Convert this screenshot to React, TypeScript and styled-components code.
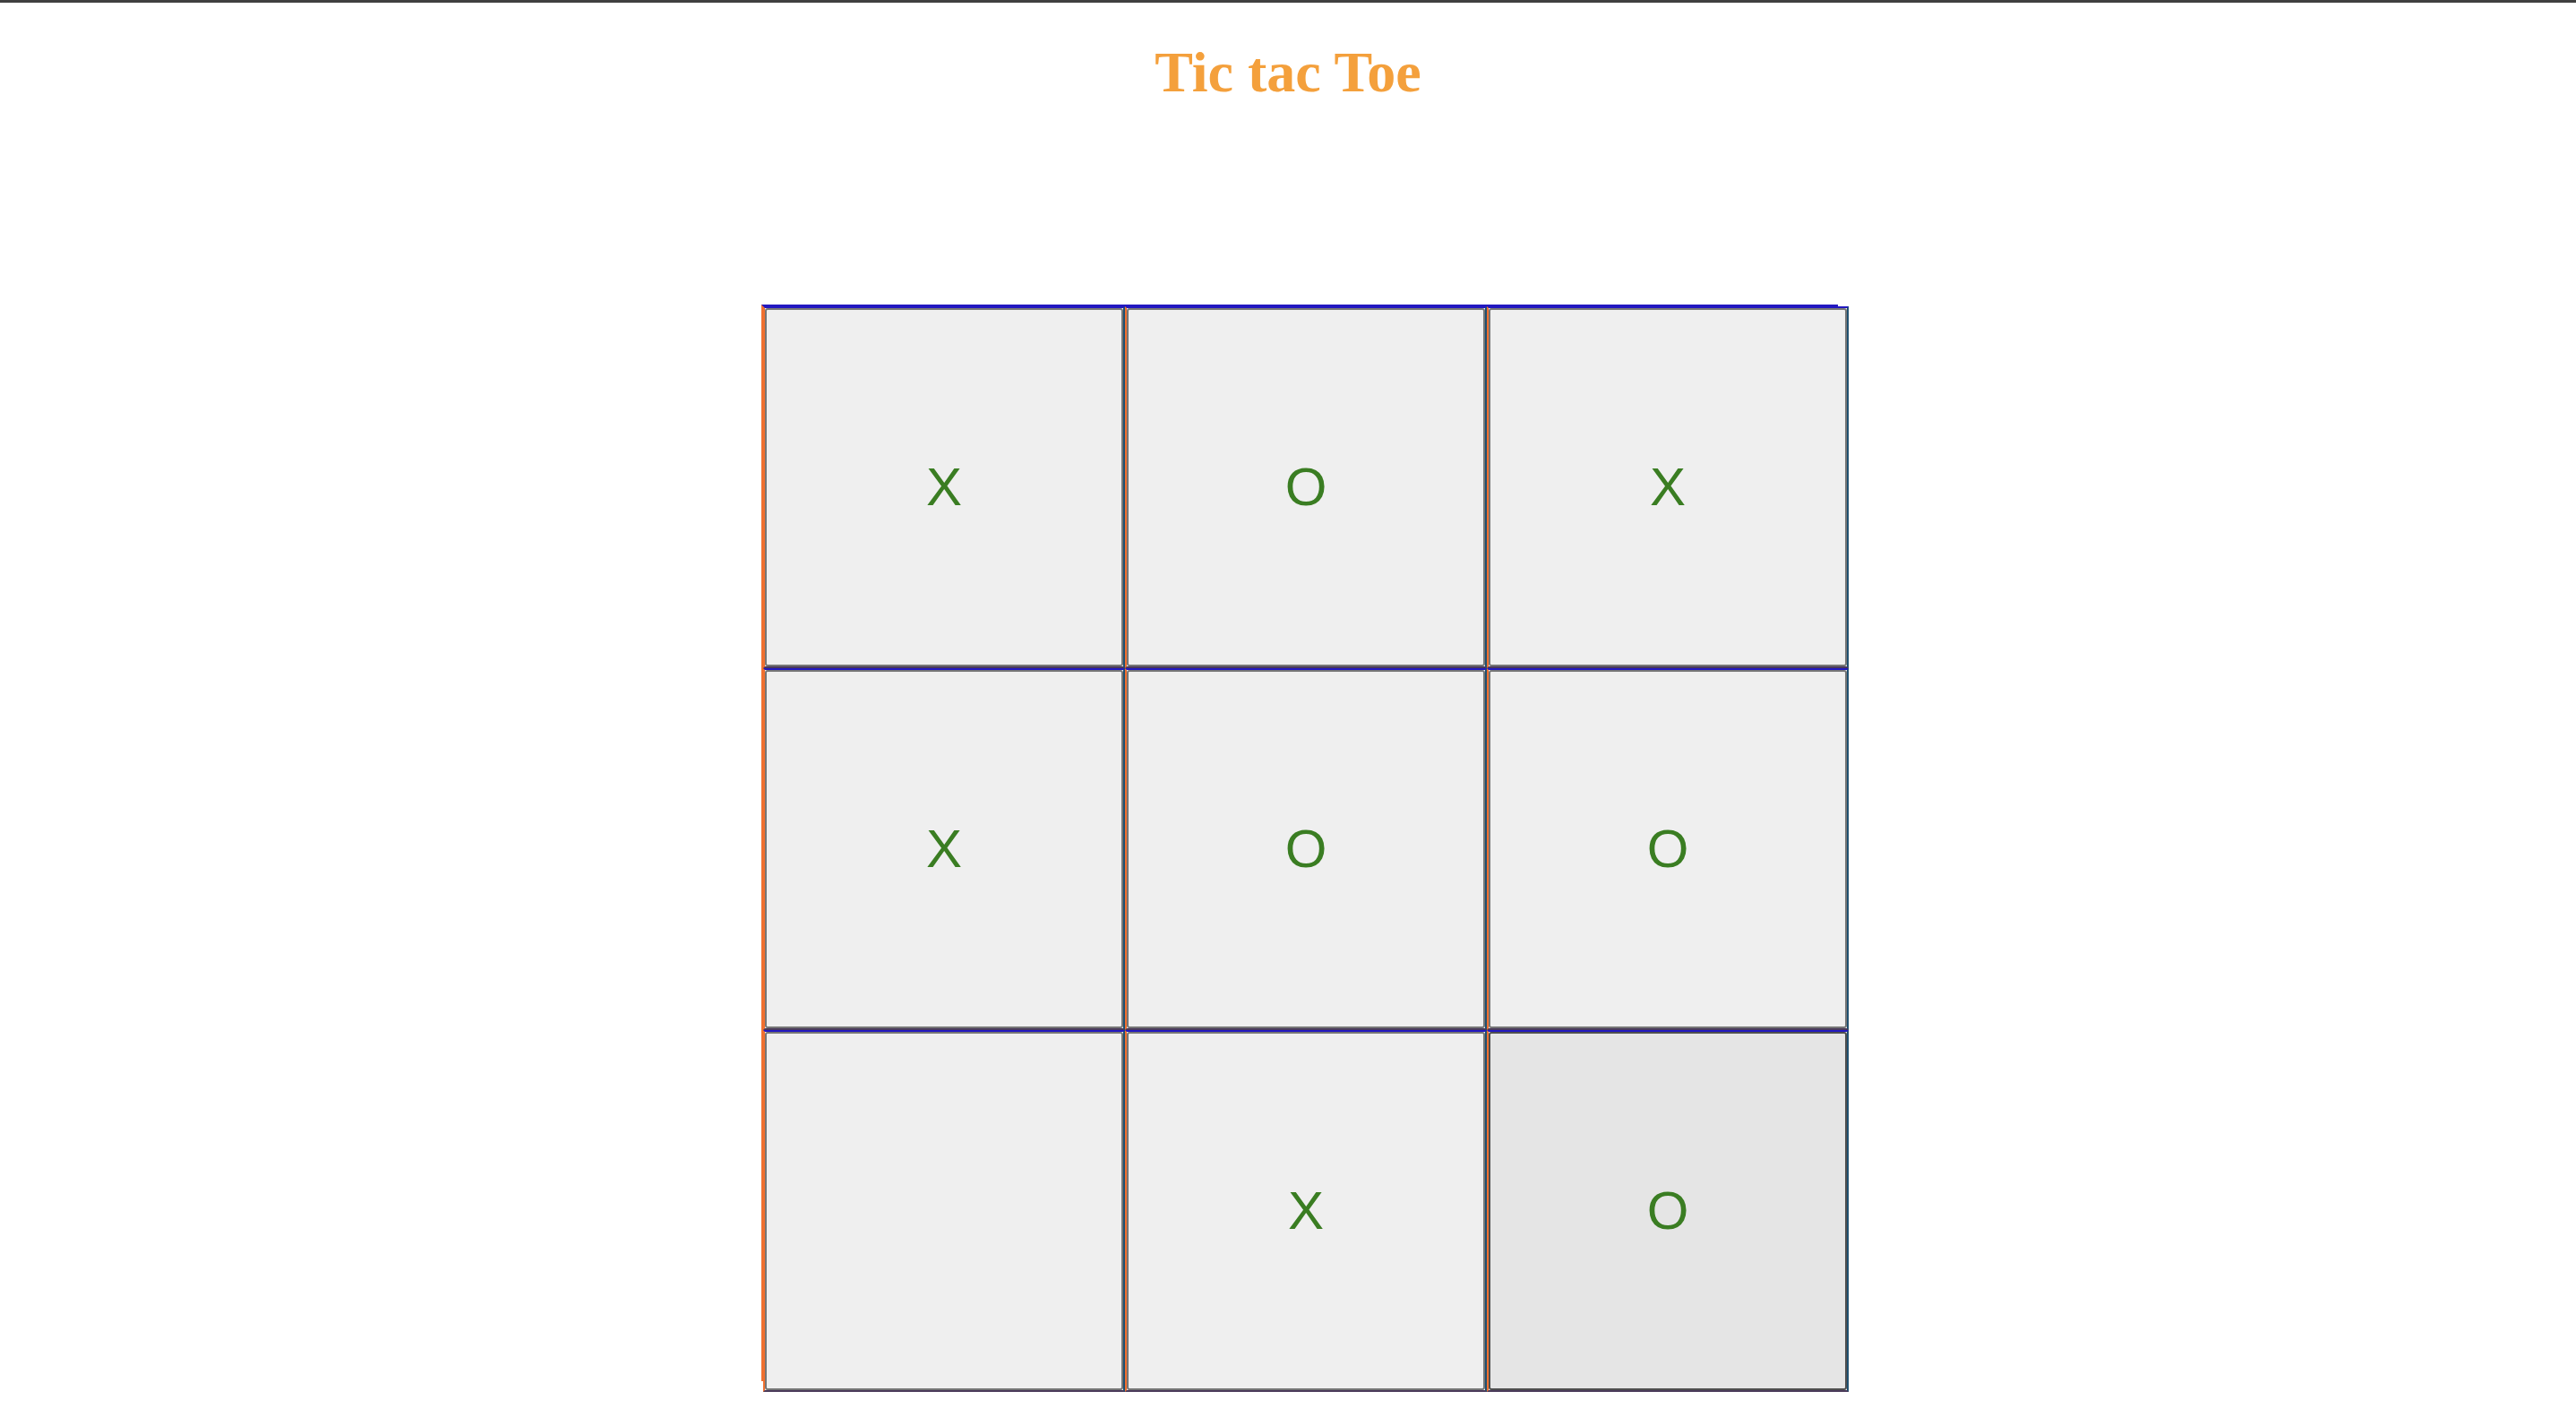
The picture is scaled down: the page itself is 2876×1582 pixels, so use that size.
import styled, { createGlobalStyle } from "styled-components";

const GlobalStyle = createGlobalStyle`
  html, body {
    margin: 0;
    padding: 0;
    background: #ffffff;
  }
  * { box-sizing: border-box; }
`;

const Page = styled.div`
  display: flex;
  flex-direction: column;
  min-height: 1582px;
`;

const TopBar = styled.div`
  height: 3px;
  background: #404040;
`;

const Title = styled.h1`
  margin: 46px 0 0;
  font-family: "Liberation Serif", "Times New Roman", serif;
  font-size: 64px;
  line-height: 64px;
  font-weight: 700;
  text-align: center;
  color: #f4a03c;
`;

const Board = styled.div`
  margin: 227px 0 0 850px;
  width: 1202px;
  height: 1202px;
  border-left: 2px solid #f07030;
  border-top: 2px solid #2218c0;
  display: grid;
  grid-template-columns: repeat(3, 404px);
  grid-auto-rows: 404px;
`;

const Cell = styled.div`
  border-left: 2px solid #f07030;
  border-top: 2px solid #2218c0;
  border-right: 2px solid #1f5070;
  border-bottom: 2px solid #4a3a5a;
  display: flex;
`;

const Square = styled.button<{ $hovered?: boolean }>`
  flex: 1;
  margin: 0;
  padding: 0;
  border: 2px solid ${(p) => (p.$hovered ? "#4f4f4f" : "#767676")};
  border-radius: 3px;
  background: ${(p) => (p.$hovered ? "#e5e5e5" : "#efefef")};
  color: #3a7d22;
  font-family: "Liberation Sans", Arial, sans-serif;
  font-size: 60px;
  line-height: 1;
  display: flex;
  align-items: center;
  justify-content: center;
  cursor: pointer;
`;

const squares = ["X", "O", "X", "X", "O", "O", "", "X", "O"];

export default function App() {
  return (
    <Page>
      <GlobalStyle />
      <TopBar />
      <Title>Tic tac Toe</Title>
      <Board>
        {squares.map((value, i) => (
          <Cell key={i}>
            <Square $hovered={i === 8}>{value}</Square>
          </Cell>
        ))}
      </Board>
    </Page>
  );
}
